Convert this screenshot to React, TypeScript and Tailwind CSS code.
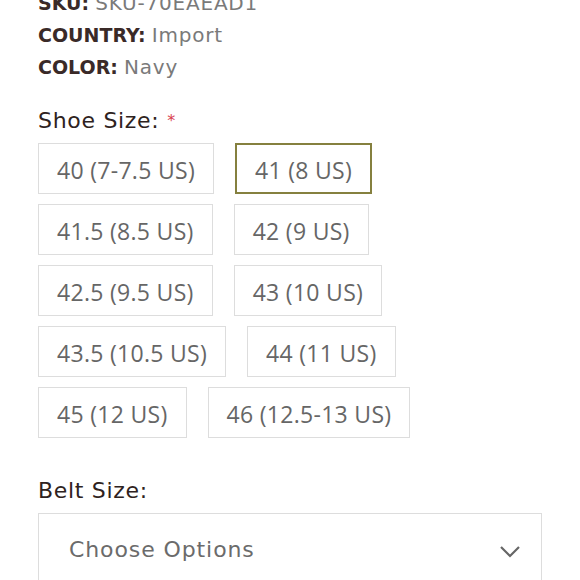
import React from "react";

const rows: string[][] = [
  ["40 (7-7.5 US)", "41 (8 US)"],
  ["41.5 (8.5 US)", "42 (9 US)"],
  ["42.5 (9.5 US)", "43 (10 US)"],
  ["43.5 (10.5 US)", "44 (11 US)"],
  ["45 (12 US)", "46 (12.5-13 US)"],
];

const selected = "41 (8 US)";

const heading = { fontFamily: '"DejaVu Sans", "Open Sans", sans-serif' };
const body = { fontFamily: '"Open Sans", sans-serif' };

export default function App() {
  return (
    <div className="w-[580px] h-[580px] overflow-hidden bg-white pl-[38px]">
      {/* product meta */}
      <div className="-mt-[13px] text-[19px] leading-[32px]" style={heading}>
        <p>
          <span className="font-bold text-[#3a2a28]">SKU:</span>{" "}
          <span className="text-[#7a7a7a] text-[20px] tracking-[0.8px]">SKU-70EAEAD1</span>
        </p>
        <p>
          <span className="font-bold text-[#3a2a28]">COUNTRY:</span>{" "}
          <span className="text-[#7a7a7a] text-[20px] tracking-[0.8px]">Import</span>
        </p>
        <p>
          <span className="font-bold text-[#3a2a28]">COLOR:</span>{" "}
          <span className="text-[#7a7a7a] text-[20px] tracking-[0.8px]">Navy</span>
        </p>
      </div>

      {/* shoe size */}
      <div
        className="mt-[22px] text-[22px] tracking-[0.7px] leading-[32px] text-[#2e2220]"
        style={heading}
      >
        Shoe Size: <span className="text-[#d9434f] text-[16px] align-top">*</span>
      </div>
      <div className="mt-[6px] flex flex-col gap-[10px]" style={body}>
        {rows.map((pair) => (
          <div key={pair[0]} className="flex gap-[21px]">
            {pair.map((label) => (
              <button
                key={label}
                className={
                  label === selected
                    ? "h-[51px] px-[18px] pt-[3px] border-2 border-[#85803f] text-[23px] tracking-[0.3px] text-[#666666]"
                    : "h-[51px] px-[18px] pt-[3px] border-[1.5px] border-[#dddddd] text-[23px] tracking-[0.3px] text-[#666666]"
                }
              >
                {label}
              </button>
            ))}
          </div>
        ))}
      </div>

      {/* belt size */}
      <div
        className="mt-[37px] text-[22px] tracking-[0.7px] leading-[32px] text-[#2e2220]"
        style={heading}
      >
        Belt Size:
      </div>
      <div className="mt-[6px] w-[504px] h-[90px] border-[1.5px] border-[#dddddd] flex items-start pt-[18px] pl-[30px] pr-[20px]">
        <span
          className="flex-1 text-[22px] tracking-[0.9px] leading-[36px] text-[#6b6b6b]"
          style={heading}
        >
          Choose Options
        </span>
        <svg width="22" height="14" viewBox="0 0 22 14" className="mt-[13px]">
          <path d="M2 2 L11 11 L20 2" fill="none" stroke="#666" strokeWidth="2.2" />
        </svg>
      </div>
    </div>
  );
}
